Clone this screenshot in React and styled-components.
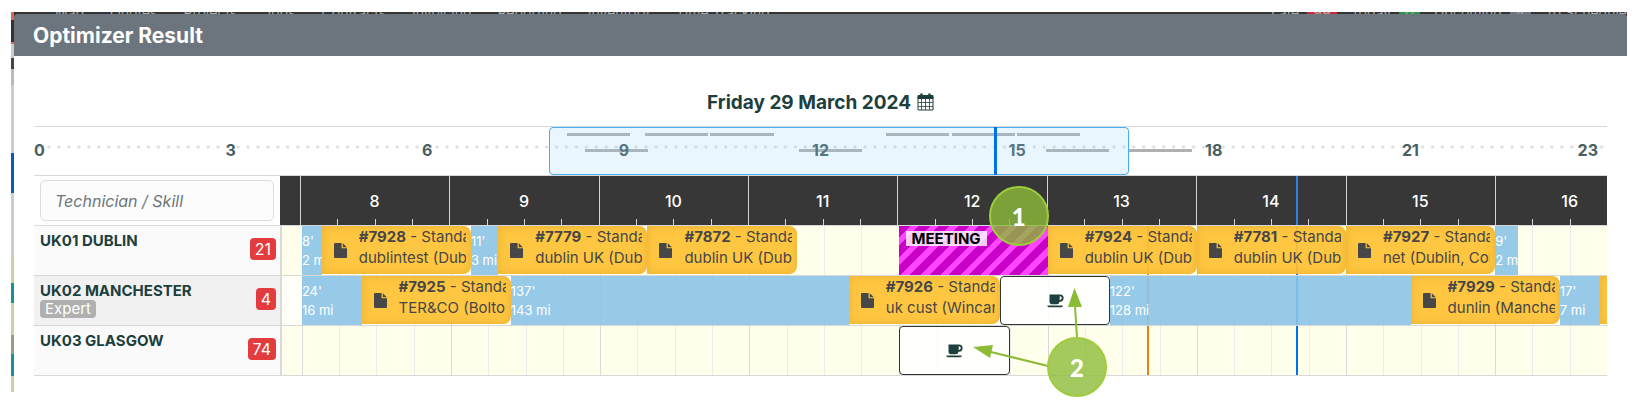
import styled, { createGlobalStyle, css } from "styled-components";

const GlobalStyle = createGlobalStyle`
  * {
    box-sizing: border-box;
  }

  body {
    margin: 0;
    background: #fff;
    color: #1d3f3d;
    font-family: Inter, "Liberation Sans", sans-serif;
  }

  #root {
    min-height: 100vh;
    display: flow-root;
  }
`;

// visible window of the board, in minutes of the day
const START = 7 * 60 + 52;
const END = 16 * 60 + 45;
const NOW = 14 * 60 + 40;
const DEADLINE = 13 * 60 + 40;

const at = (time) => {
  const [h, m] = time.split(":");
  return Number(h) * 60 + Number(m);
};

const Backdrop = styled.div`
  margin: 12px 13px 0 11px;
  background: #333;
  position: relative;
`;

const AppMenu = styled.nav`
  position: absolute;
  inset: 0 0 auto 0;
  height: 2px;
  padding: 0 0 0 44px;
  display: flex;
  gap: 26px;
  overflow: hidden;
  color: #aaa;
  font-size: 14px;
  line-height: 2px;
  white-space: nowrap;
`;

const MenuFilters = styled.div`
  display: flex;
  gap: 14px;
  margin-left: auto;
`;

const MenuBadge = styled.span`
  margin-left: 8px;
  padding: 0 6px;
  background: ${(p) => p.$color};
`;

const AppEdge = styled.div`
  position: absolute;
  inset: 0 auto 0 0;
  width: 3px;
  background: linear-gradient(
    #d9694f 0 8px, #333 8px 30px, #d9694f 30px 32px, #ccc 32px 46px,
    #444 46px 57px, #bbb 57px 73px, #ccc 73px 141px, #0d5bb5 141px 181px,
    #ccc 181px 244px, #d3cfa4 244px 271px, #1192a0 271px 291px,
    #d3cfa4 291px 323px, #9c9a88 323px 342px, #1192a0 342px 364px, #d3cfa4 364px
  );
`;

const Modal = styled.section`
  position: relative;
  margin-left: 3px;
  padding-top: 2px;
`;

const ModalHeader = styled.header`
  height: 42px;
  padding: 0 19px;
  display: flex;
  align-items: center;
  background: #6c757d;
  border-radius: 4px 4px 0 0;
`;

const Title = styled.h1`
  margin: 0;
  color: #fff;
  font-size: 21px;
  font-weight: 700;
`;

const ModalBody = styled.div`
  padding: 32px 20px 16px;
  background: #fff;
`;

const DateButton = styled.button`
  display: flex;
  align-items: center;
  gap: 6px;
  height: 28px;
  margin: 0 auto;
  padding: 0;
  border: 0;
  background: none;
  color: inherit;
  font-family: inherit;
  font-size: 19px;
  font-weight: 700;
`;

const Overview = styled.div`
  display: grid;
  grid-template-columns: repeat(1440, minmax(0, 1fr));
  grid-template-rows: 48px;
  margin-top: 10px;
  border-top: 1px solid #d8d8d8;
  background: radial-gradient(circle, #dcdcdc 1px, transparent 2px) 0 16px / calc(100% / 158) 8px repeat-x;
`;

const OverviewHour = styled.span`
  grid-row: 1;
  grid-column: ${(p) => p.$from + 1} / ${(p) => p.$to + 1};
  justify-self: ${(p) => p.$align || "center"};
  align-self: center;
  padding: 0 ${(p) => (p.$align === "end" ? "9px" : 0)} 3px 0;
  color: #48605f;
  font-size: 16px;
  font-weight: 700;
  line-height: 20px;
`;

const OverviewBar = styled.span`
  grid-row: 1;
  grid-column: ${(p) => p.$from + 1} / ${(p) => p.$from + 59};
  height: 3px;
  margin-top: ${(p) => (p.$line ? 22 : 6)}px;
  background: #b0b0b0;
`;

const OverviewWindow = styled.span`
  grid-row: 1;
  grid-column: ${START} / ${END - 2};
  border: 1px solid #45aef5;
  border-radius: 4px;
  background: rgba(145, 210, 250, 0.2);
`;

const OverviewNow = styled.span`
  grid-row: 1;
  grid-column: ${NOW} / span 3;
  width: 3px;
  background: #0070e8;
`;

const Board = styled.div`
  position: relative;
`;

const Row = styled.div`
  display: grid;
  grid-template-columns: 246px minmax(0, 1fr);
  height: 50px;
  border-top: 1px solid #d8d8d8;

  &:last-of-type {
    height: 51px;
    border-bottom: 1px solid #d8d8d8;
  }
`;

const lane = css`
  display: grid;
  grid-template-columns: repeat(${END - START}, minmax(0, 1fr));
  grid-template-rows: minmax(0, 1fr);
  overflow: hidden;
`;

const HourLane = styled.div`
  ${lane}
  background: #373737;
`;

const Lane = styled.div`
  ${lane}
  border-left: 2px solid #dadada;
  background: ${(p) => (p.$active ? "#fffff8" : "#ffffec")};
`;

const slot = css`
  grid-row: 1;
  grid-column: ${(p) => p.$from - START + 1} / ${(p) => Math.min(p.$to, END) - START + 1};
  min-width: 0;
`;

const HourLabel = styled.span`
  ${slot}
  align-self: center;
  color: #fff;
  font-size: 16px;
  font-weight: 500;
  text-align: center;
`;

const Tick = styled.span`
  grid-row: 1;
  grid-column: ${(p) => p.$at - START + 1} / span 1;
  align-self: end;
  width: 1px;
  height: ${(p) => (p.$at % 60 ? "6px" : "100%")};
  background: #d5d5d5;
`;

const GridLine = styled.span`
  grid-row: 1;
  grid-column: ${(p) => p.$at - START + 1} / span 1;
  width: 1px;
  background: ${(p) => (p.$at % 60 ? "#ececec" : "#d9d9d9")};
`;

const Marker = styled.span`
  grid-row: 1;
  grid-column: ${(p) => p.$at - START + 1} / span 1;
  width: 2px;
  background: ${(p) => p.$color};
`;

const Travel = styled.div`
  ${slot}
  padding-top: 6px;
  overflow: hidden;
  background: rgba(139, 196, 230, 0.9);
  color: #fff;
  font-size: 13px;
  line-height: 19px;
  white-space: pre;
`;

const Job = styled.article`
  ${slot}
  display: grid;
  grid-template-columns: 13px minmax(0, 1fr);
  gap: 12px;
  align-items: center;
  margin-bottom: 1px;
  padding: 0 5px 0 12px;
  overflow: hidden;
  border-radius: 0 8px 8px 0;
  background: rgba(255, 194, 52, 0.93);
  box-shadow: inset 0 0 8px rgba(190, 140, 20, 0.35);
  color: #474747;
`;

const JobText = styled.div`
  align-self: start;
  overflow: hidden;
  font-size: 15px;
  line-height: 21px;
  white-space: pre;
`;

const Meeting = styled.div`
  ${slot}
  padding: 5px 7px;
  background: repeating-linear-gradient(135deg, #c800c8 0 8px, #ff45ff 8px 14px);
`;

const MeetingLabel = styled.strong`
  display: block;
  width: max-content;
  padding: 0 6px;
  background: rgba(255, 255, 255, 0.8);
  color: #000;
  font-size: 15px;
  line-height: 15px;
`;

const Break = styled.div`
  ${slot}
  display: flex;
  align-items: center;
  justify-content: center;
  border: 1px solid #333;
  border-radius: 4px;
  background: rgba(255, 255, 255, 0.85);
`;

const SearchCell = styled.div`
  padding: 4px 6px;
`;

const Search = styled.input`
  width: 100%;
  height: 41px;
  padding: 0 14px;
  border: 1px solid #dcdcdc;
  border-radius: 5px;
  background: #fcfcfc;
  font-family: inherit;
  font-size: 16px;
  font-style: italic;

  &::placeholder {
    color: #6c757d;
    opacity: 1;
  }
`;

const Technician = styled.div`
  display: flex;
  align-items: center;
  justify-content: space-between;
  padding: 0 4px 3px 6px;
  background: ${(p) => (p.$active ? "#f1f1f1" : "#fafafa")};
`;

const Name = styled.div`
  align-self: start;
  padding-top: 6px;
  font-size: 15px;
  font-weight: 700;
  line-height: 18px;
`;

const Skill = styled.span`
  display: block;
  width: max-content;
  padding: 0 5px;
  border-radius: 4px;
  background: #b0b0b0;
  color: #fff;
  font-size: 15px;
  font-weight: 400;
`;

const Count = styled.span`
  padding: 0 5px;
  border-radius: 4px;
  background: #e33c3e;
  color: #fff;
  font-size: 16px;
  line-height: 22px;
`;

const Callout = styled.span`
  position: absolute;
  left: ${(p) => p.$left};
  top: ${(p) => p.$top}px;
  width: 60px;
  height: 60px;
  display: flex;
  align-items: center;
  justify-content: center;
  border: 2px solid #9fcc3b;
  border-radius: 50%;
  background: rgba(141, 187, 56, 0.8);
  color: #fff;
  font-family: Lato, sans-serif;
  font-size: 24px;
  font-weight: 900;
`;

const Arrows = styled.svg`
  position: absolute;
  left: 59.7%;
  top: 111px;
`;

const CalendarIcon = () => (
  <svg width="17" height="18" viewBox="0 0 17 18" fill="none" stroke="currentColor">
    <path d="M1 4h15v13H1z" />
    <path d="M1 2.5h15v3H1z" fill="currentColor" />
    <path d="M4.5 0.5v3M12.5 0.5v3" strokeWidth="2.4" />
    <path d="M4.5 6v11M8.5 6v11M12.5 6v11M1 9.500h15M1 13.500h15" strokeWidth="0.8" />
  </svg>
);

const FileIcon = () => (
  <svg width="13" height="15" viewBox="0 0 13 15" fill="currentColor">
    <path d="M1 0h6.6v5.2H13V14a1 1 0 0 1-1 1H1a1 1 0 0 1-1-1V1a1 1 0 0 1 1-1z" />
    <path d="M8.8 0.2 12.8 4.2H8.8z" />
  </svg>
);

const CoffeeIcon = () => (
  <svg width="17" height="14" viewBox="0 0 17 14" fill="currentColor">
    <path d="M2.5 0.5H13a3.6 3.6 0 0 1 0 7.2h-.5a2.8 2.8 0 0 1-2.8 2.5H5.3a2.8 2.8 0 0 1-2.8-2.8zM12.7 2.3v3.6h.3a1.8 1.8 0 0 0 0-3.6z" />
    <path d="M0.3 11.5h15.5c0 1-1 1.8-2 1.8H2.3c-1 0-2-.8-2-1.8z" />
  </svg>
);

const menu = ["Map", "Quotes", "Projects", "Jobs", "Contracts", "Invoicing", "Reporting", "Inventory", "Time Tracking"];

const technicians = [
  {
    name: "UK01 DUBLIN",
    count: 21,
    items: [
      { type: "travel", from: "8:00", to: "8:08", time: "8'", distance: "2 mi" },
      { type: "job", from: "8:08", to: "9:08", id: "#7928", place: "dublintest (Dublin)" },
      { type: "travel", from: "9:08", to: "9:19", time: "11'", distance: "3 mi" },
      { type: "job", from: "9:19", to: "10:19", id: "#7779", place: "dublin UK (Dublin)" },
      { type: "job", from: "10:19", to: "11:19", id: "#7872", place: "dublin UK (Dublin)" },
      { type: "meeting", from: "12:00", to: "13:00" },
      { type: "job", from: "13:00", to: "14:00", id: "#7924", place: "dublin UK (Dublin)" },
      { type: "job", from: "14:00", to: "15:00", id: "#7781", place: "dublin UK (Dublin)" },
      { type: "job", from: "15:00", to: "16:00", id: "#7927", place: "net (Dublin, Cork)" },
      { type: "travel", from: "16:00", to: "16:09", time: "9'", distance: "2 mi" },
    ],
  },
  {
    name: "UK02 MANCHESTER",
    skill: "Expert",
    count: 4,
    active: true,
    items: [
      { type: "travel", from: "8:00", to: "8:24", time: "24'", distance: "16 mi" },
      { type: "job", from: "8:24", to: "9:24", id: "#7925", place: "TER&CO (Bolton)" },
      { type: "travel", from: "9:24", to: "11:40", time: "137'", distance: "143 mi" },
      { type: "job", from: "11:40", to: "12:41", id: "#7926", place: "uk cust (Wincanton)" },
      { type: "break", from: "12:41", to: "13:25" },
      { type: "travel", from: "13:25", to: "15:26", time: "122'", distance: "128 mi" },
      { type: "job", from: "15:26", to: "16:26", id: "#7929", place: "dunlin (Manchester)" },
      { type: "travel", from: "16:26", to: "16:42", time: "17'", distance: "7 mi" },
      { type: "job", from: "16:42", to: "17:42" },
    ],
  },
  {
    name: "UK03 GLASGOW",
    count: 74,
    items: [{ type: "break", from: "12:00", to: "12:45" }],
  },
];

const quarters = [];
for (let m = START + 8; m < END; m += 15) quarters.push(m);

const hours = [8, 9, 10, 11, 12, 13, 14, 15, 16];

const Item = ({ item }) => {
  const place = { $from: at(item.from), $to: at(item.to) };

  if (item.type === "travel") {
    return <Travel {...place}>{item.time}<br />{item.distance}</Travel>;
  }
  if (item.type === "meeting") {
    return <Meeting {...place}><MeetingLabel>MEETING</MeetingLabel></Meeting>;
  }
  if (item.type === "break") {
    return <Break {...place}><CoffeeIcon /></Break>;
  }
  return (
    <Job {...place}>
      {item.id && (
        <>
          <FileIcon />
          <JobText><b>{item.id}</b> - Standard<br />{item.place}</JobText>
        </>
      )}
    </Job>
  );
};

const DayOverview = () => (
  <Overview>
    {technicians.map((tech, line) =>
      tech.items.filter((i) => i.type === "job").map((i) => (
        <OverviewBar key={i.from} $from={at(i.from)} $line={line} />
      ))
    )}
    <OverviewHour $from={0} $to={60} $align="start">0</OverviewHour>
    {[3, 6, 9, 12, 15, 18, 21].map((h) => (
      <OverviewHour key={h} $from={h * 60 - 30} $to={h * 60 + 30}>{h}</OverviewHour>
    ))}
    <OverviewHour $from={1380} $to={1440} $align="end">23</OverviewHour>
    <OverviewWindow />
    <OverviewNow />
  </Overview>
);

const App = () => {
  return (
    <>
      <GlobalStyle />
      <Backdrop>
        <AppMenu>
          {menu.map((label) => <span key={label}>{label}</span>)}
          <MenuFilters>
            <span>Late<MenuBadge $color="#d0283c">99</MenuBadge></span>
            <span>Today<MenuBadge $color="#1f9a45">0</MenuBadge></span>
            <span>Upcoming<MenuBadge $color="#6c757d">4</MenuBadge></span>
            <span>To Schedule</span>
          </MenuFilters>
        </AppMenu>
        <AppEdge />
        <Modal>
          <ModalHeader>
            <Title>Optimizer Result</Title>
          </ModalHeader>
          <ModalBody>
            <DateButton>Friday 29 March 2024 <CalendarIcon /></DateButton>
            <DayOverview />
            <Board>
              <Row>
                <SearchCell>
                  <Search aria-label="Technician / Skill" placeholder="Technician / Skill" />
                </SearchCell>
                <HourLane>
                  {quarters.map((m) => <Tick key={m} $at={m} />)}
                  {hours.map((h) => (
                    <HourLabel key={h} $from={h * 60 + 15} $to={h * 60 + 45}>{h}</HourLabel>
                  ))}
                  <Marker $at={NOW} $color="#2f7fe0" />
                </HourLane>
              </Row>
              {technicians.map((tech) => (
                <Row key={tech.name}>
                  <Technician $active={tech.active}>
                    <Name>
                      {tech.name}
                      {tech.skill && <Skill>{tech.skill}</Skill>}
                    </Name>
                    <Count>{tech.count}</Count>
                  </Technician>
                  <Lane $active={tech.active}>
                    {quarters.map((m) => <GridLine key={m} $at={m} />)}
                    <Marker $at={DEADLINE} $color="#e8801a" />
                    <Marker $at={NOW} $color="#0070f0" />
                    {tech.items.map((item) => <Item key={item.from} item={item} />)}
                  </Lane>
                </Row>
              ))}
              <Arrows width="112" height="82" viewBox="0 0 112 82" fill="#8cbb35" stroke="#8cbb35">
                <path d="M104 52 102 20M75 80 18 66" strokeWidth="2" />
                <path d="M101.500 2 109 21 95 21zM0 61 20 59 17 72z" stroke="none" />
              </Arrows>
              <Callout $left="60.7%" $top={11}>1</Callout>
              <Callout $left="64.4%" $top={162}>2</Callout>
            </Board>
          </ModalBody>
        </Modal>
      </Backdrop>
    </>
  );
};

export default App;
